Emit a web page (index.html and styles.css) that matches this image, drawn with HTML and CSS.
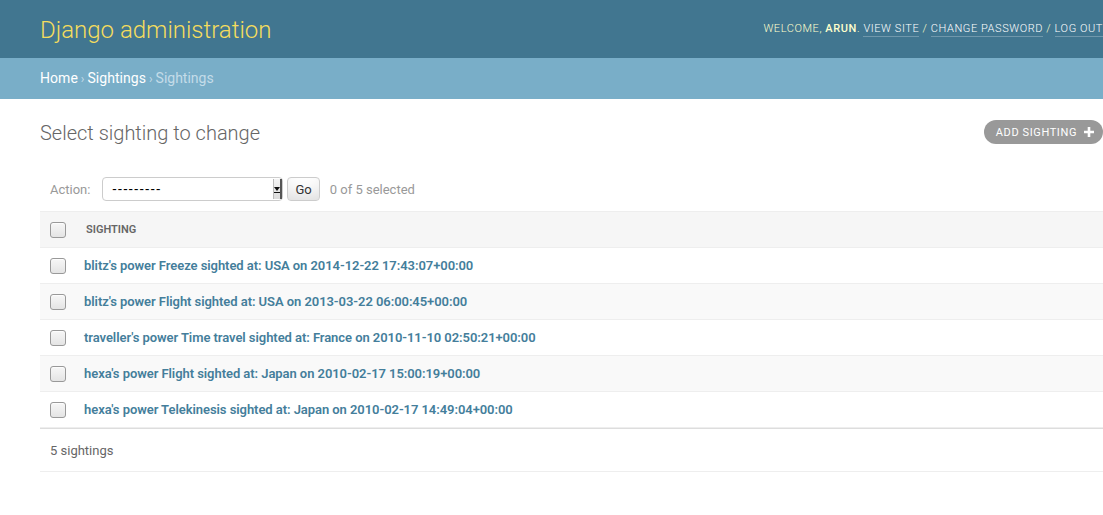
FILE: index.html
```html
<!DOCTYPE html>
<html lang="en">
<head>
<meta charset="utf-8">
<title>Select sighting to change | Django site admin</title>
<link rel="stylesheet" href="styles.css">
</head>
<body>
<div class="page">
  <header class="header">
    <h1 class="branding">Django administration</h1>
    <div class="user-tools">
      Welcome, <strong>arun</strong>.
      <a href="#">View site</a> /
      <a href="#">Change password</a> /
      <a href="#">Log out</a>
    </div>
  </header>
  <nav class="breadcrumbs">
    <a href="#">Home</a> <span class="sep">›</span> <a href="#">Sightings</a> <span class="sep">›</span> Sightings
  </nav>
  <main class="content">
    <div class="title-row">
      <h1 class="title">Select sighting to change</h1>
      <a class="addlink" href="#">Add sighting
        <svg class="plus" width="10" height="10" viewBox="0 0 10 10"><path d="M3.7 0h2.6v3.7H10v2.6H6.3V10H3.7V6.3H0V3.7h3.7z" fill="#fff"/></svg>
      </a>
    </div>
    <div class="actions">
      <label class="action-label">Action:</label>
      <span class="select-wrap">
        <select class="action-select"><option>---------</option></select>
        <span class="select-arrow"><svg width="6" height="8" viewBox="0 0 6 8"><path d="M0 2h6L3 6z" fill="#111"/><path d="M0 7.5h6" stroke="#111" stroke-width="1"/></svg></span>
      </span>
      <button class="go" type="button">Go</button>
      <span class="counter">0 of 5 selected</span>
    </div>
    <table class="result-list">
      <thead>
        <tr>
          <th class="cb-col"><input type="checkbox" class="cb"></th>
          <th class="col-head">Sighting</th>
        </tr>
      </thead>
      <tbody>
        <tr class="row1"><td class="cb-col"><input type="checkbox" class="cb"></td><th class="name"><a href="#">blitz's power Freeze sighted at: USA on 2014-12-22 17:43:07+00:00</a></th></tr>
        <tr class="row2"><td class="cb-col"><input type="checkbox" class="cb"></td><th class="name"><a href="#">blitz's power Flight sighted at: USA on 2013-03-22 06:00:45+00:00</a></th></tr>
        <tr class="row1"><td class="cb-col"><input type="checkbox" class="cb"></td><th class="name"><a href="#">traveller's power Time travel sighted at: France on 2010-11-10 02:50:21+00:00</a></th></tr>
        <tr class="row2"><td class="cb-col"><input type="checkbox" class="cb"></td><th class="name"><a href="#">hexa's power Flight sighted at: Japan on 2010-02-17 15:00:19+00:00</a></th></tr>
        <tr class="row1"><td class="cb-col"><input type="checkbox" class="cb"></td><th class="name"><a href="#">hexa's power Telekinesis sighted at: Japan on 2010-02-17 14:49:04+00:00</a></th></tr>
      </tbody>
    </table>
    <p class="paginator">5 sightings</p>
  </main>
</div>
</body>
</html>
```

FILE: styles.css
```css
html, body {
  margin: 0;
  padding: 0;
  overflow: hidden;
}
body {
  font-family: Roboto, "Liberation Sans", Arial, sans-serif;
  font-size: 14px;
  color: #333;
  background: #fff;
}
.page {
  width: 1143px;
}
a {
  text-decoration: none;
}

/* header */
.header {
  display: flex;
  justify-content: space-between;
  align-items: center;
  height: 58px;
  padding: 0 40px;
  background: #417690;
  color: #ffc;
}
.branding {
  margin: 2px 0 0;
  font-size: 24px;
  font-weight: 300;
  color: #f5dd5d;
  line-height: 30px;
}
.user-tools {
  font-size: 11px;
  font-weight: 300;
  letter-spacing: 0.58px;
  text-transform: uppercase;
  line-height: 14px;
  margin-top: 0;
}
.user-tools strong {
  font-weight: 500;
}
.user-tools a {
  color: #fff;
  border-bottom: 1px solid rgba(255, 255, 255, 0.25);
  padding-bottom: 1px;
}

/* breadcrumbs */
.breadcrumbs {
  background: #79aec8;
  padding: 10px 40px;
  line-height: 20px;
  font-size: 14px;
  color: #c4dce8;
}
.breadcrumbs a {
  color: #fff;
  letter-spacing: 0.05px;
}
.breadcrumbs .sep {
  font-size: 12px;
  margin: 0 -0.5px;
}

/* content */
.content {
  padding: 20px 40px;
}
.title-row {
  display: flex;
  justify-content: space-between;
  align-items: center;
  height: 28px;
  margin-bottom: 20px;
}
.title {
  margin: -1px 0 0;
  font-size: 20px;
  font-weight: 300;
  color: #666;
  line-height: 28px;
}
.addlink {
  display: flex;
  align-items: center;
  height: 24px;
  padding: 0 9px 0 12px;
  background: #999;
  border-radius: 15px;
  color: #fff;
  font-size: 11px;
  font-weight: 400;
  letter-spacing: 0.6px;
  text-transform: uppercase;
  margin-top: -2px;
}
.plus {
  margin-left: 7px;
}

/* actions */
.actions {
  display: flex;
  align-items: center;
  padding: 10px;
  height: 24px;
  color: #999;
  font-size: 13px;
}
.action-label {
  color: #999;
}
.select-wrap {
  position: relative;
  display: inline-block;
  margin-left: 12px;
  height: 24px;
}
.action-select {
  -webkit-appearance: none;
  appearance: none;
  width: 181px;
  height: 24px;
  box-sizing: border-box;
  border: 1px solid #ccc;
  border-radius: 4px;
  background: #fff;
  color: #000;
  font-family: Roboto, "Liberation Sans", sans-serif;
  font-size: 14px;
  letter-spacing: 1.6px;
  padding: 0 0 0 9px;
  margin: 0;
}
.select-arrow {
  position: absolute;
  top: 2px;
  right: 1px;
  width: 9px;
  height: 20px;
  display: flex;
  align-items: center;
  justify-content: center;
  background: linear-gradient(#f4f4f4, #dcdcdc);
  border-left: 1px solid #bbb;
  border-right: 2px solid #555;
  box-sizing: border-box;
}
.go {
  height: 24px;
  margin-left: 4px;
  padding: 0 7px;
  border: 1px solid #ccc;
  border-radius: 4px;
  background: #fff;
  box-shadow: 0 -15px 20px -10px rgba(0, 0, 0, 0.15) inset;
  color: #333;
  font-family: Roboto, "Liberation Sans", sans-serif;
  font-size: 13px;
}
.counter {
  margin-left: 10px;
  color: #999;
}

/* table */
.result-list {
  width: 100%;
  border-collapse: collapse;
}
.result-list thead th {
  background: #f6f6f6;
  border-top: 1px solid #eee;
  border-bottom: 1px solid #eee;
  height: 35px;
  padding: 0;
  vertical-align: middle;
  text-align: left;
}
.cb-col {
  width: 36px;
  text-align: center !important;
  padding: 0 !important;
}
.col-head {
  padding: 0 10px !important;
  font-size: 11px;
  font-weight: 600;
  color: #666;
  text-transform: uppercase;
}
.result-list tbody td,
.result-list tbody th {
  height: 19px;
  padding: 8px;
  border-bottom: 1px solid #eee;
  vertical-align: middle;
  text-align: left;
  font-size: 13px;
  line-height: 19px;
}
.row1 {
  background: #fff;
}
.row2 {
  background: #f9f9f9;
}
.name a {
  color: #447e9b;
  font-weight: 600;
  letter-spacing: -0.06px;
}
.cb {
  -webkit-appearance: none;
  appearance: none;
  display: block;
  width: 16px;
  height: 16px;
  margin: 0 auto;
  box-sizing: border-box;
  border: 1px solid #999;
  border-radius: 3px;
  background: linear-gradient(#f7f7f7, #e4e4e4);
  box-shadow: inset 0 1px 1px rgba(255, 255, 255, 0.8);
}
.paginator {
  margin: 0;
  padding: 11px 10px 9px;
  line-height: 22px;
  font-size: 13px;
  color: #666;
  border-top: 1px solid #ddd;
  border-bottom: 1px solid #eee;
}
```
